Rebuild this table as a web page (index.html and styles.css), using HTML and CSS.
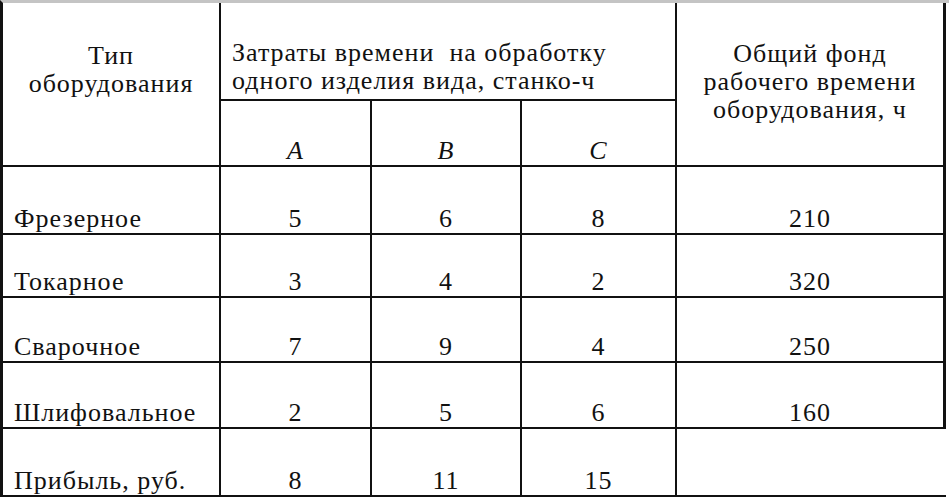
FILE: index.html
```html
<!DOCTYPE html>
<html lang="ru">
<head>
<meta charset="utf-8">
<link rel="stylesheet" href="styles.css">
</head>
<body>
<div class="table">
  <div class="cell h-type">Тип<br>оборудования</div>
  <div class="cell h-cost">Затраты времени&nbsp; на обработку<br>одного изделия вида, станко-ч</div>
  <div class="cell h-fund">Общий фонд<br>рабочего времени<br>оборудования, ч</div>
  <div class="cell sub"><i>A</i></div>
  <div class="cell sub"><i>B</i></div>
  <div class="cell sub"><i>C</i></div>

  <div class="cell name">Фрезерное</div>
  <div class="cell num">5</div>
  <div class="cell num">6</div>
  <div class="cell num">8</div>
  <div class="cell num last">210</div>

  <div class="cell name">Токарное</div>
  <div class="cell num">3</div>
  <div class="cell num">4</div>
  <div class="cell num">2</div>
  <div class="cell num last">320</div>

  <div class="cell name">Сварочное</div>
  <div class="cell num">7</div>
  <div class="cell num">9</div>
  <div class="cell num">4</div>
  <div class="cell num last">250</div>

  <div class="cell name">Шлифовальное</div>
  <div class="cell num">2</div>
  <div class="cell num">5</div>
  <div class="cell num">6</div>
  <div class="cell num last">160</div>

  <div class="cell name">Прибыль, руб.</div>
  <div class="cell num">8</div>
  <div class="cell num">11</div>
  <div class="cell num">15</div>
  <div class="cell num empty"></div>
</div>
</body>
</html>
```

FILE: styles.css
```css
html, body {
  margin: 0;
  padding: 0;
  background: #ffffff;
}

body {
  width: 950px;
  height: 498px;
  overflow: hidden;
  font-family: "Liberation Serif", "Times New Roman", serif;
  font-size: 26px;
  line-height: 28px;
  letter-spacing: 1px;
  color: #111;
}

.table {
  display: grid;
  grid-template-columns: 218px 151px 150px 155px 269px;
  grid-template-rows: 98px 66px 68px 63px 65px 66px 68px;
  width: 949px;
  box-sizing: border-box;
  border-left: 3px solid #111;
  border-top: 3px solid #c4c4c4;
}

.cell {
  box-sizing: border-box;
  border-right: 2px solid #111;
  border-bottom: 2px solid #111;
  display: flex;
}

.h-type {
  grid-row: 1 / 3;
  grid-column: 1;
  justify-content: center;
  text-align: center;
  align-items: flex-start;
  padding-top: 39px;
}

.h-cost {
  grid-row: 1;
  grid-column: 2 / 5;
  align-items: flex-end;
  padding: 0 0 4px 11px;
}

.h-fund {
  grid-row: 1 / 3;
  grid-column: 5;
  justify-content: center;
  text-align: center;
  align-items: center;
  border-right-width: 3px;
  padding-bottom: 4px;
}

.sub {
  justify-content: center;
  align-items: flex-end;
}

.sub i {
  font-style: italic;
}

.name {
  align-items: flex-end;
  padding: 0 0 0 11px;
}

.num {
  justify-content: center;
  align-items: flex-end;
}

.last {
  border-right-width: 3px;
}

.empty {
  border-right: none;
}
```
